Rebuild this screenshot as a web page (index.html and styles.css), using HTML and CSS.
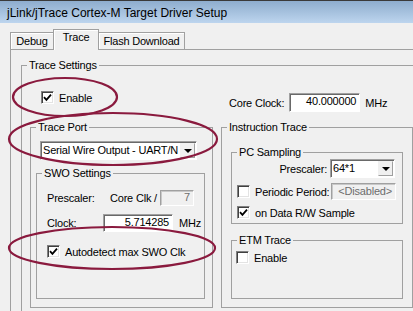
FILE: index.html
```html
<!DOCTYPE html>
<html lang="en">
<head>
    <meta charset="UTF-8">
    <meta name="viewport" content="width=device-width, initial-scale=1.0">
    <title>jLink/jTrace Cortex-M Target Driver Setup</title>
    <link rel="stylesheet" href="styles.css">
</head>
<body>
<div class="window">
    <div class="titlebar">jLink/jTrace Cortex-M Target Driver Setup</div>

    <!-- Tab strip -->
    <div class="tabs">
        <div class="tab tab-debug">Debug</div>
        <div class="tab tab-trace active">Trace</div>
        <div class="tab tab-flash">Flash Download</div>
    </div>

    <div class="panel">
        <fieldset class="group trace-settings">
            <legend>Trace Settings</legend>
            <div class="settings-grid">
                <div class="enable-row">
                    <span class="check on"><svg width="9" height="9" viewBox="0 0 9 9"><polyline points="1,4.2 3.4,6.8 8,1.6" fill="none" stroke="#000" stroke-width="1.8"/></svg></span>
                    <span class="check-label">Enable</span>
                </div>
                <div class="core-clock">
                    <span>Core Clock:</span>
                    <span class="edit core-edit">40.000000</span>
                    <span class="unit">MHz</span>
                </div>

                <!-- Left column -->
                <fieldset class="group trace-port">
                    <legend>Trace Port</legend>
                    <div class="combo port-combo">
                        <span class="combo-text">Serial Wire Output - UART/N</span>
                        <span class="combo-btn"><span class="arrow"></span></span>
                    </div>
                    <fieldset class="group swo">
                        <legend>SWO Settings</legend>
                        <div class="swo-row prescaler-row">
                            <span class="swo-label">Prescaler:</span>
                            <span>Core Clk /</span>
                            <span class="edit disabled div-edit">7</span>
                        </div>
                        <div class="swo-row clock-row">
                            <span class="swo-label clock-label">Clock:</span>
                            <span class="edit clock-edit">5.714285</span>
                            <span class="unit">MHz</span>
                        </div>
                        <div class="swo-row autodetect-row">
                            <span class="check on"><svg width="9" height="9" viewBox="0 0 9 9"><polyline points="1,4.2 3.4,6.8 8,1.6" fill="none" stroke="#000" stroke-width="1.8"/></svg></span>
                            <span class="check-label">Autodetect max SWO Clk</span>
                        </div>
                    </fieldset>
                </fieldset>

                <!-- Right column -->
                <fieldset class="group instr">
                    <legend>Instruction Trace</legend>
                    <fieldset class="group pc">
                        <legend>PC Sampling</legend>
                        <div class="pc-row pc-prescaler">
                            <span>Prescaler:</span>
                            <div class="combo pc-combo">
                                <span class="combo-text">64*1</span>
                                <span class="combo-btn"><span class="arrow"></span></span>
                            </div>
                        </div>
                        <div class="pc-row pc-period">
                            <span class="check"></span>
                            <span class="check-label">Periodic Period:</span>
                            <span class="edit disabled period-edit">&lt;Disabled&gt;</span>
                        </div>
                        <div class="pc-row pc-data">
                            <span class="check on"><svg width="9" height="9" viewBox="0 0 9 9"><polyline points="1,4.2 3.4,6.8 8,1.6" fill="none" stroke="#000" stroke-width="1.8"/></svg></span>
                            <span class="check-label">on Data R/W Sample</span>
                        </div>
                    </fieldset>
                    <fieldset class="group etm">
                        <legend>ETM Trace</legend>
                        <div class="pc-row etm-row">
                            <span class="check"></span>
                            <span class="check-label">Enable</span>
                        </div>
                    </fieldset>
                </fieldset>
            </div>
        </fieldset>
    </div>

    <!-- Hand drawn highlight marks -->
    <svg class="marks" width="413" height="311" viewBox="0 0 413 311">
        <ellipse cx="65" cy="97" rx="52" ry="19"/>
        <ellipse cx="113" cy="139" rx="104" ry="26"/>
        <ellipse cx="112" cy="248" rx="103" ry="21"/>
    </svg>
</div>
</body>
</html>
```

FILE: styles.css
```css
* {
    box-sizing: border-box;
}

body {
    margin: 0;
    font-family: "Liberation Sans", Arial, sans-serif;
    font-size: 11px;
    letter-spacing: -0.2px;
    color: #000;
    background: #f0f0f0;
}

.window {
    position: relative;
    width: 413px;
    height: 311px;
    overflow: hidden;
    background: #f0f0f0;
}

.titlebar {
    height: 23px;
    border-top: 1px solid #3a3a3a;
    background: linear-gradient(#8eadce, #bdd5ee);
    padding: 2px 0 0 7px;
    line-height: 21px;
    font-size: 12px;
    letter-spacing: 0;
    white-space: nowrap;
}

/* tabs */
.tabs {
    position: relative;
    z-index: 1;
    display: flex;
    align-items: flex-end;
    height: 20px;
    margin-top: 6px;
    padding-left: 10px;
}

.tab {
    height: 17px;
    border: 1px solid #a0a0a0;
    border-bottom: none;
    background: #f0f0f0;
    box-shadow: inset 1px 1px 0 #fff;
    text-align: center;
    line-height: 16px;
}

.tab-debug {
    width: 44px;
}

.tab-trace {
    width: 46px;
    margin-left: -1px;
}

.tab-flash {
    width: 87px;
    margin-left: -1px;
}

.tab.active {
    height: 21px;
    margin-bottom: -1px;
    line-height: 15px;
}

.panel {
    margin-left: 10px;
    border-top: 1px solid #a0a0a0;
    border-left: 1px solid #a0a0a0;
    padding: 9px 0 0 10px;
    height: 270px;
}

/* group boxes */
.group {
    margin: 0;
    padding: 0;
    min-width: 0;
    border: 1px solid #a0a0a0;
}

.group legend {
    margin-left: 5px;
    padding: 0 2px;
    line-height: 13px;
}

.trace-settings {
    width: 420px;
    height: 300px;
}

.settings-grid {
    display: grid;
    grid-template-columns: 183px 192px;
    grid-template-rows: 49px 187px;
    column-gap: 8px;
    padding-left: 8px;
}

.enable-row {
    display: flex;
    align-items: center;
    align-self: start;
    margin-top: 19px;
    padding-left: 11px;
}

.core-clock {
    display: flex;
    align-items: center;
    align-self: start;
    margin-top: 21px;
    padding-left: 8px;
}

.core-edit {
    width: 71px;
    height: 19px;
    margin-left: 5px;
}

.unit {
    margin-left: 5px;
}

/* checkboxes */
.check {
    display: inline-flex;
    align-items: center;
    justify-content: center;
    width: 13px;
    height: 13px;
    flex: none;
    border: 1px solid;
    border-color: #808080 #fff #fff #808080;
    box-shadow: inset 1px 1px 0 #404040, inset -1px -1px 0 #e3e3e3;
    background: #fff;
}

.check-label {
    margin-left: 5px;
    white-space: nowrap;
}

/* edit boxes */
.edit {
    display: inline-block;
    border: 1px solid;
    border-color: #a0a0a0 #fff #fff #a0a0a0;
    box-shadow: inset 1px 1px 0 #696969;
    background: #fff;
    text-align: right;
    padding-right: 3px;
    line-height: 15px;
    white-space: nowrap;
}

.edit.disabled {
    background: #f0f0f0;
    color: #6d6d6d;
    box-shadow: inset 1px 1px 0 #c8c8c8;
}

/* combo boxes */
.combo {
    display: flex;
    height: 19px;
    border: 1px solid;
    border-color: #a0a0a0 #fff #fff #a0a0a0;
    box-shadow: inset 1px 1px 0 #696969;
    background: #fff;
    padding: 1px 1px 1px 2px;
}

.combo-text {
    flex: 1;
    overflow: hidden;
    white-space: nowrap;
    line-height: 15px;
}

.combo-btn {
    display: flex;
    align-items: center;
    justify-content: center;
    width: 15px;
    flex: none;
    background: #f0f0f0;
    border: 1px solid;
    border-color: #f0f0f0 #a0a0a0 #a0a0a0 #f0f0f0;
}

.arrow {
    width: 0;
    height: 0;
    border-left: 4px solid transparent;
    border-right: 4px solid transparent;
    border-top: 4px solid #000;
}

/* trace port column */
.port-combo {
    width: 157px;
    margin: 7px 0 0 9px;
}

.swo {
    width: 169px;
    height: 132px;
    margin: 7px 0 0 5px;
}

.swo-row {
    display: flex;
    align-items: center;
    padding-left: 10px;
}

.swo-label {
    width: 63px;
}

.clock-label {
    width: 56px;
}

.prescaler-row {
    margin-top: 10px;
}

.div-edit {
    width: 34px;
    height: 16px;
    margin-left: 3px;
    line-height: 13px;
}

.clock-row {
    margin-top: 8px;
}

.clock-edit {
    width: 70px;
    height: 18px;
}

.clock-row .unit {
    margin-left: 6px;
}

.autodetect-row {
    margin-top: 13px;
}

/* instruction trace column */
.pc {
    width: 172px;
    height: 78px;
    margin: 12px 0 0 9px;
}

.pc-row {
    display: flex;
    align-items: center;
    padding-left: 5px;
}

.pc-prescaler {
    justify-content: flex-end;
    padding-right: 7px;
}

.pc-combo {
    width: 65px;
    margin-left: 3px;
}

.pc-period {
    margin-top: 5px;
    padding-right: 6px;
}

.period-edit {
    width: 65px;
    height: 17px;
    margin-left: auto;
    color: #000;
    line-height: 14px;
}

.pc-data {
    margin-top: 6px;
}

.etm {
    width: 172px;
    height: 65px;
    margin: 10px 0 0 9px;
}

.etm-row {
    margin-top: 4px;
    padding-left: 4px;
}

/* red marks drawn over the dialog */
.marks {
    position: absolute;
    top: 0;
    left: 0;
    pointer-events: none;
}

.marks ellipse {
    fill: none;
    stroke: #8a1a3e;
    stroke-width: 2.2;
}
```
